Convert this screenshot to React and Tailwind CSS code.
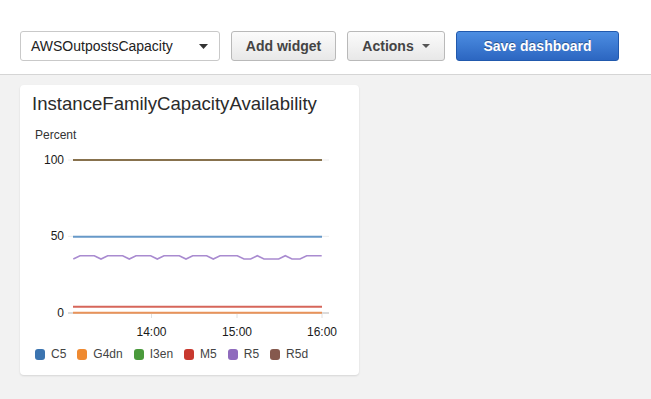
import React from "react";

const font = { fontFamily: '"Liberation Sans", Arial, Helvetica, sans-serif' };

// page coords -> chart
const yOf = (v) => 312.7 - v * 1.527;
const H = 255.7;
const L = 259;

const purple = [
  [73.3, L], [80, H], [94.3, H], [101, L], [107.7, H], [122.7, H], [129.3, L],
  [136, H], [150.7, H], [157.3, L], [164, H], [179.3, H], [186, L], [192.7, H],
  [206.7, H], [213.3, L], [220, H], [237.3, H], [244, L], [250.7, L], [257.3, H],
  [264, L], [278.7, L], [285.3, H], [292, L], [300, L], [306.7, H], [321.7, H],
];

const legend = [
  { name: "C5", color: "#3b74b0" },
  { name: "G4dn", color: "#ef8a31" },
  { name: "I3en", color: "#4a9a3c" },
  { name: "M5", color: "#c8392f" },
  { name: "R5", color: "#8f6bbd" },
  { name: "R5d", color: "#85594d" },
];

const Caret = () => (
  <svg width="9" height="5" viewBox="0 0 9 5">
    <path d="M0 0 L9 0 L4.5 5 Z" fill="#333" />
  </svg>
);

const Chart = () => (
  <svg width="339" height="200" viewBox="20 142 339 200" className="block">
    {/* grid */}
    <line x1="68" x2="329" y1={yOf(100)} y2={yOf(100)} stroke="#ececec" strokeWidth="1" />
    <line x1="68" x2="329" y1={yOf(50)} y2={yOf(50)} stroke="#ececec" strokeWidth="1" />
    <line x1="68" x2="329" y1={313} y2={313} stroke="#cfcfcf" strokeWidth="1.5" />
    {[151.5, 237, 322].map((x) => (
      <line key={x} x1={x} x2={x} y1="313" y2="318" stroke="#e0e0e0" strokeWidth="1" />
    ))}

    {/* y labels */}
    <g fontSize="12" fill="#1a1a1a" textAnchor="end" style={font}>
      <text x="64" y={yOf(100) + 4}>100</text>
      <text x="64" y={yOf(50) + 4}>50</text>
      <text x="64" y={313 + 4}>0</text>
    </g>
    {/* x labels */}
    <g fontSize="12" fill="#1a1a1a" textAnchor="middle" style={font}>
      <text x="151.5" y="336">14:00</text>
      <text x="237" y="336">15:00</text>
      <text x="322" y="336">16:00</text>
    </g>

    {/* series */}
    <line x1="73" x2="322" y1="160" y2="160" stroke="#87714d" strokeWidth="2" />
    <line x1="73" x2="322" y1="236.7" y2="236.7" stroke="#6799c8" strokeWidth="2" />
    <polyline
      points={purple.map((p) => p.join(",")).join(" ")}
      fill="none"
      stroke="#a98bd0"
      strokeWidth="1.6"
    />
    <line x1="73" x2="322" y1="306.7" y2="306.7" stroke="#d6665a" strokeWidth="2" />
    <line x1="73" x2="322" y1="312.7" y2="312.7" stroke="#e9935a" strokeWidth="2" />
  </svg>
);

const App = () => {
  return (
    <div className="w-[651px] h-[399px] overflow-hidden bg-[#f2f2f2]" style={font}>
      {/* toolbar */}
      <div className="h-[75px] bg-white border-b border-[#d5d5d5] pt-[31px] pl-[20px] flex items-start gap-[11px]">
        <div className="w-[200px] h-[30px] bg-white border border-[#c9c9c9] rounded-[3px] flex items-center justify-between pl-[10px] pr-[11px]">
          <span className="text-[14px] text-[#222]">AWSOutpostsCapacity</span>
          <Caret />
        </div>
        <button className="w-[105px] h-[30px] rounded-[3px] border border-[#b9b9b9] bg-gradient-to-b from-[#fbfbfb] to-[#e8e8e8] text-[14px] font-bold text-[#444]">
          Add widget
        </button>
        <button className="w-[98px] h-[30px] rounded-[3px] border border-[#b9b9b9] bg-gradient-to-b from-[#fbfbfb] to-[#e8e8e8] text-[14px] font-bold text-[#444] flex items-center justify-center gap-[8px]">
          <span>Actions</span>
          <svg width="8" height="4" viewBox="0 0 8 4">
            <path d="M0 0 L8 0 L4 4 Z" fill="#555" />
          </svg>
        </button>
        <button className="w-[163px] h-[30px] rounded-[3px] border border-[#2159ad] bg-gradient-to-b from-[#4d8ee2] to-[#2c66c1] text-[14px] font-bold text-white [text-shadow:0_-1px_0_rgba(0,0,0,0.35)]">
          Save dashboard
        </button>
      </div>

      {/* widget */}
      <div className="ml-[20px] mt-[10px] w-[339px] h-[290px] bg-white rounded-[4px] shadow-[0_1px_2px_rgba(0,0,0,0.12)]">
        <div className="pt-[7px] pl-[12px] text-[18.6px] leading-[24px] text-[#2b2b2b]">
          InstanceFamilyCapacityAvailability
        </div>
        <div className="pt-[12px] pl-[15px] text-[12px] leading-[14px] text-[#333]">Percent</div>
        <Chart />
        <div className="flex items-center pl-[15px] mt-[3px] text-[12px] text-[#444]">
          {legend.map((l) => (
            <div key={l.name} className="flex items-center mr-[11px]">
              <span
                className="w-[10px] h-[11px] rounded-[3px] mr-[6px]"
                style={{ backgroundColor: l.color }}
              />
              <span>{l.name}</span>
            </div>
          ))}
        </div>
      </div>
    </div>
  );
};

export default App;
